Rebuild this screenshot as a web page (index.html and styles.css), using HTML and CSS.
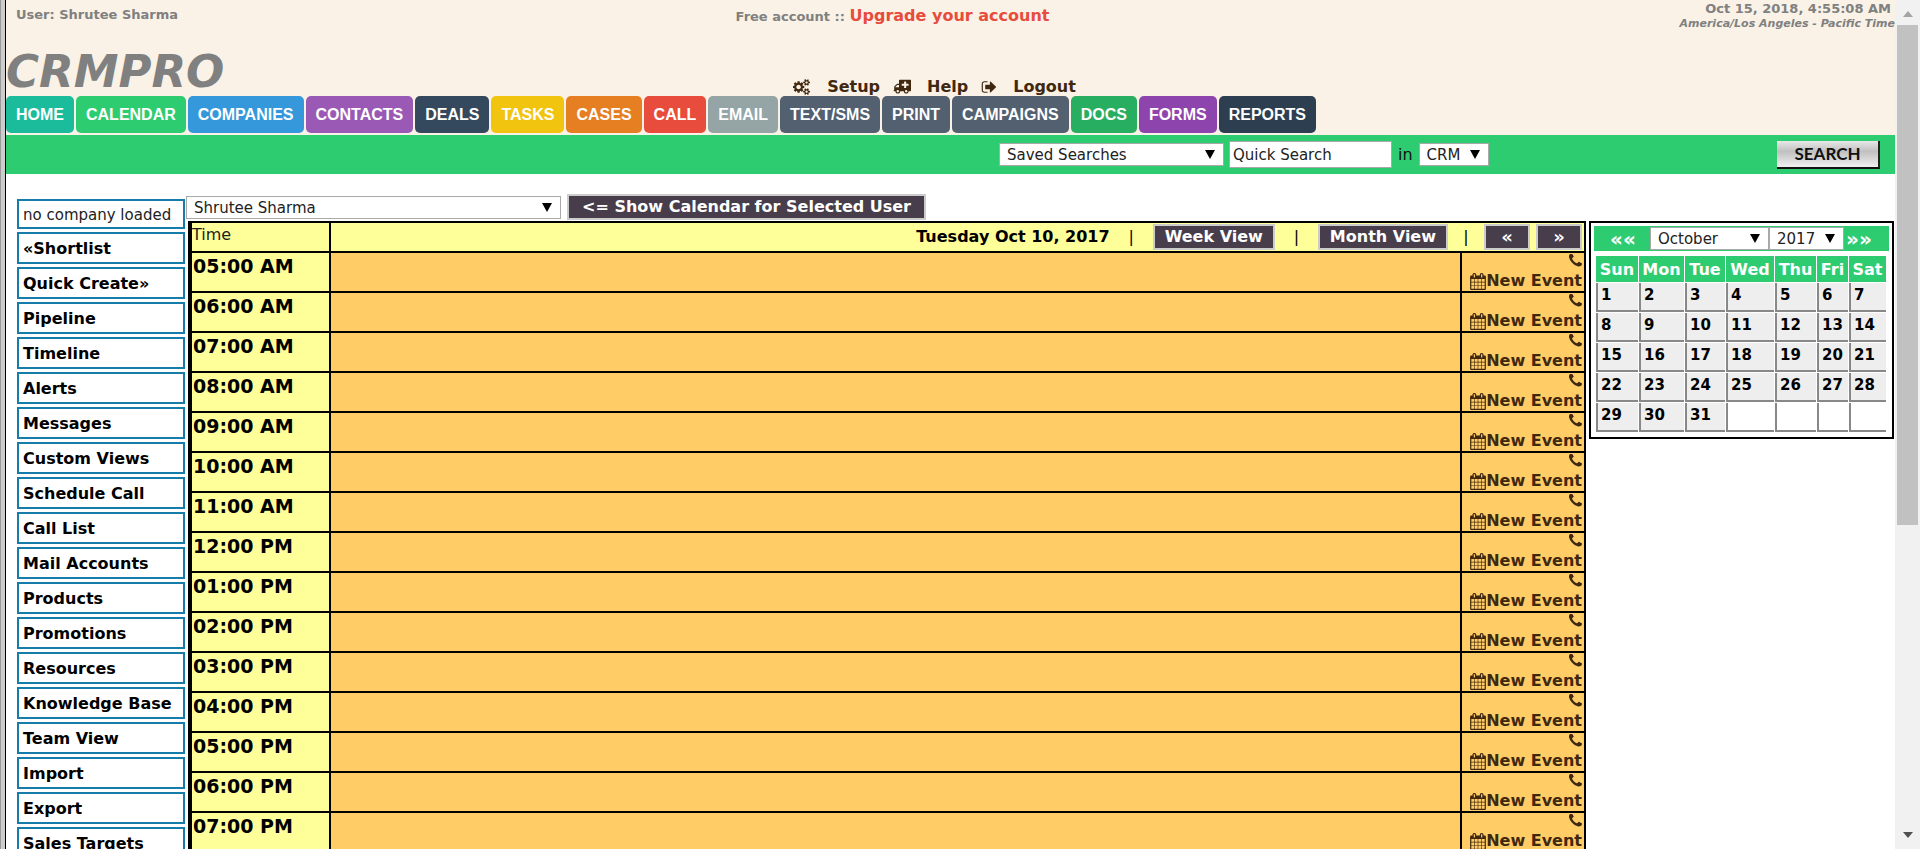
FILE: index.html
```html
<!DOCTYPE html>
<html lang="en">
<head>
<meta charset="utf-8">
<title>CRMPRO</title>
<link rel="stylesheet" href="styles.css">
</head>
<body>
<svg class="sprite" aria-hidden="true">
  <symbol id="i-phone" viewBox="192 192 1408 1408"><path d="M1600 1240q0 27-10 70.500t-21 68.500q-21 50-122 106-94 51-186 51-27 0-53-3.500t-57.500-12.500-47-14.500-55.500-20.500-49-18q-98-35-175-83-127-79-264-216t-216-264q-48-77-83-175-3-9-18-49t-20.500-55.500-14.500-47-12.500-57.500-3.500-53q0-92 51-186 56-101 106-122 25-11 68.500-21t70.500-10q14 0 21 3 18 6 53 76 11 19 30 54t35 63.500 31 53.500q3 4 17.500 25t21.500 35.500 7 28.500q0 20-28.500 50t-62 55-62 53-28.500 46q0 9 5 22.500t8.500 20.500 14 24 11.500 19q76 137 174 235t235 174q2 1 19 11.500t24 14 20.500 8.500 22.500 5q18 0 46-28.500t53-62 55-62 50-28.500q14 0 28.500 7t35.500 21.500 25 17.500q25 15 53.500 31t63.500 35 54 30q70 35 76 53 3 7 3 21z"/></symbol>
  <symbol id="i-cal" viewBox="64 0 1664 1792"><path d="M192 1664h288v-288h-288v288zm352 0h320v-288h-320v288zm-352-352h288v-320h-288v320zm352 0h320v-320h-320v320zm-352-384h288v-288h-288v288zm736 736h320v-288h-320v288zm-384-736h320v-288h-320v288zm768 736h288v-288h-288v288zm-384-352h320v-320h-320v320zm-352-864v-288q0-13-9.500-22.500t-22.500-9.500h-64q-13 0-22.500 9.500t-9.500 22.500v288q0 13 9.500 22.500t22.500 9.500h64q13 0 22.500-9.500t9.500-22.500zm736 864h288v-320h-288v320zm-384-384h320v-288h-320v288zm384 0h288v-288h-288v288zm32-480v-288q0-13-9.500-22.500t-22.500-9.500h-64q-13 0-22.500 9.500t-9.500 22.500v288q0 13 9.500 22.500t22.500 9.500h64q13 0 22.500-9.500t9.500-22.500zm384-64v1280q0 52-38 90t-90 38h-1408q-52 0-90-38t-38-90v-1280q0-52 38-90t90-38h128v-96q0-66 47-113t113-47h64q66 0 113 47t47 113v96h384v-96q0-66 47-113t113-47h64q66 0 113 47t47 113v96h128q52 0 90 38t38 90z"/></symbol>
  <symbol id="i-cogs" viewBox="0 0 1920 1792"><path d="M832 896q0-106-75-181t-181-75-181 75-75 181 75 181 181 75 181-75 75-181zm768 512q0-52-38-90t-90-38-90 38-38 90q0 53 37.500 90.500t90.500 37.500 90.500-37.500 37.500-90.500zm0-1024q0-52-38-90t-90-38-90 38-38 90q0 53 37.500 90.500t90.500 37.500 90.500-37.500 37.500-90.500zm-384 421v185q0 10-7 19.500t-16 10.500l-155 24q-11 35-32 76 34 48 90 115 7 11 7 20 0 12-7 19-23 30-82.500 89.500t-78.500 59.500q-11 0-21-7l-115-90q-37 19-77 31-11 108-23 155-7 24-30 24h-186q-11 0-20-7.500t-10-17.500l-23-153q-34-10-75-31l-118 89q-7 7-20 7-11 0-21-8-144-133-144-160 0-9 7-19 10-14 41-53t47-61q-23-44-35-82l-152-24q-10-1-17-9.500t-7-19.500v-185q0-10 7-19.500t16-10.500l155-24q11-35 32-76-34-48-90-115-7-11-7-20 0-12 7-20 22-30 82-89t79-59q11 0 21 7l115 90q34-18 77-32 11-108 23-154 7-24 30-24h186q11 0 20 7.500t10 17.500l23 153q34 10 75 31l118-89q8-7 20-7 11 0 21 8 144 133 144 160 0 8-7 19-12 16-42 54t-45 60q23 48 34 82l152 23q10 2 17 10.500t7 19.500zm640 533v140q0 16-149 31-12 27-30 52 51 113 51 138 0 4-4 7-122 71-124 71-8 0-46-47t-52-68q-20 2-30 2t-30-2q-14 21-52 68t-46 47q-2 0-124-71-4-3-4-7 0-25 51-138-18-25-30-52-149-15-149-31v-140q0-16 149-31 13-29 30-52-51-113-51-138 0-4 4-7 4-2 35-20t59-34 30-16q8 0 46 46.500t52 67.500q20-2 30-2t30 2q51-71 92-112l6-2q4 0 124 70 4 3 4 7 0 25-51 138 17 23 30 52 149 15 149 31zm0-1024v140q0 16-149 31-12 27-30 52 51 113 51 138 0 4-4 7-122 71-124 71-8 0-46-47t-52-68q-20 2-30 2t-30-2q-14 21-52 68t-46 47q-2 0-124-71-4-3-4-7 0-25 51-138-18-25-30-52-149-15-149-31v-140q0-16 149-31 13-29 30-52-51-113-51-138 0-4 4-7 4-2 35-20t59-34 30-16q8 0 46 46.500t52 67.500q20-2 30-2t30 2q51-71 92-112l6-2q4 0 124 70 4 3 4 7 0 25-51 138 17 23 30 52 149 15 149 31z"/></symbol>
  <symbol id="i-amb" viewBox="0 0 1920 1536"><path fill-rule="evenodd" d="M256 800h384V544H482q-13 0-22 9L265 748q-9 9-9 22zM1664 610V450q0-32-32-32h-224V224q0-32-32-32h-160q-32 0-32 32v194H960q-32 0-32 32v160q0 32 32 32h224v194q0 32 32 32h160q32 0 32-32V642h224q32 0 32-32zM1920 64v1088q0 64-64 64h-192q0 106-75 181t-181 75-181-75-75-181H768q0 106-75 181t-181 75-181-75-75-181H128q-64 0-64-64t64-64V770q0-64 45-109l198-198q45-45 109-45h160V64q0-64 64-64h1152q64 0 64 64zM640 1216q0-53-37-90t-91-38-90 38-38 90 38 90 90 38 91-38 37-90zM1536 1216q0-53-37-90t-91-38-90 38-38 90 38 90 90 38 91-38 37-90z"/></symbol>
  <symbol id="i-out" viewBox="64 128 1600 1536"><path d="M704 1440q0 4 1 20t.5 26.500-3 23.500-10 19.500-20.500 6.500h-320q-119 0-203.500-84.500t-84.500-203.500v-704q0-119 84.500-203.500t203.500-84.500h320q13 0 22.500 9.500t9.500 22.500q0 4 1 20t.5 26.500-3 23.500-10 19.500-20.500 6.500h-320q-66 0-113 47t-47 113v704q0 66 47 113t113 47h312l11.500 1 11.500 3 8 5.500 7 9 2 13.500zm928-544q0 26-19 45l-544 544q-19 19-45 19t-45-19-19-45v-288h-448q-26 0-45-19t-19-45v-384q0-26 19-45t45-19h448v-288q0-26 19-45t45-19 45 19l544 544q19 19 19 45z"/></symbol>
</svg>
<div class="app">
  <div class="page">
    <header class="top">
      <div class="info">
        <span class="user">User: Shrutee Sharma</span>
        <span class="plan">Free account :: <a href="#">Upgrade your account</a></span>
        <span class="clock"><span class="now">Oct 15, 2018, 4:55:08 AM</span><em>America/Los Angeles - Pacific Time</em></span>
      </div>
      <div class="brand">
        <h1>CRMPRO</h1>
        <div class="tools">
          <a href="#"><svg class="ico"><use href="#i-cogs"/></svg>Setup</a>
          <a href="#"><svg class="ico"><use href="#i-amb"/></svg>Help</a>
          <a href="#"><svg class="ico out"><use href="#i-out"/></svg>Logout</a>
        </div>
      </div>
      <nav class="tabs">
        <a class="t-home" href="#">HOME</a><a class="t-calendar" href="#">CALENDAR</a><a class="t-companies" href="#">COMPANIES</a><a class="t-contacts" href="#">CONTACTS</a><a class="t-deals" href="#">DEALS</a><a class="t-tasks" href="#">TASKS</a><a class="t-cases" href="#">CASES</a><a class="t-call" href="#">CALL</a><a class="t-email" href="#">EMAIL</a><a class="t-slate" href="#">TEXT/SMS</a><a class="t-slate" href="#">PRINT</a><a class="t-slate" href="#">CAMPAIGNS</a><a class="t-docs" href="#">DOCS</a><a class="t-forms" href="#">FORMS</a><a class="t-reports" href="#">REPORTS</a>
      </nav>
    </header>
    <form class="searchbar">
      <span class="sel w-saved"><select aria-label="Saved searches"><option>Saved Searches</option></select></span>
      <input type="text" aria-label="Quick search" value="Quick Search">
      <label for="scope">in</label>
      <span class="sel w-scope"><select id="scope"><option>CRM</option></select></span>
      <button class="go" type="button">SEARCH</button>
    </form>
    <div class="body">
      <aside class="side" id="side">
        <span class="note">no company loaded</span>
      </aside>
      <main class="main">
        <div class="pick">
          <span class="sel w-user"><select aria-label="User"><option>Shrutee Sharma</option></select></span>
          <button class="btn wide" type="button">&lt;= Show Calendar for Selected User</button>
        </div>
        <div class="cols">
          <table class="day">
            <colgroup><col class="c-time"><col><col class="c-new"></colgroup>
            <thead>
              <tr><th class="time">Time</th><th colspan="2"><div class="bar"><b>Tuesday Oct 10, 2017</b><i>|</i><button class="btn view" type="button">Week View</button><i>|</i><button class="btn view" type="button">Month View</button><i class="near">|</i><span class="pair"><button class="btn arrow" type="button">«</button><button class="btn arrow" type="button">»</button></span></div></th></tr>
            </thead>
            <tbody id="hours"></tbody>
          </table>
          <section class="month">
            <div class="mhead">
              <a href="#">««</a><span class="sel w-month"><select aria-label="Month"><option>October</option></select></span><span class="sel w-year"><select aria-label="Year"><option>2017</option></select></span><a href="#">»»</a>
            </div>
            <table class="grid">
              <colgroup><col class="d0"><col class="d1"><col class="d2"><col class="d3"><col class="d4"><col class="d5"><col class="d6"></colgroup>
              <thead><tr><th>Sun</th><th>Mon</th><th>Tue</th><th>Wed</th><th>Thu</th><th>Fri</th><th>Sat</th></tr></thead>
              <tbody id="days"></tbody>
            </table>
          </section>
        </div>
      </main>
    </div>
  </div>
  <div class="scroll"><span class="up"></span><span class="thumb"></span><span class="down"></span></div>
</div>
<script src="app.js"></script>
</body>
</html>
```
FILE: styles.css
```css
* { box-sizing: border-box; }
body {
  margin: 0;
  background: #fff;
  color: #000;
  font: 16px/20px Verdana, "DejaVu Sans", sans-serif;
}
a { color: inherit; text-decoration: none; }
.sprite { display: none; }

.app {
  display: flex;
  height: 100vh;
  overflow: hidden;
  border-left: 1px solid #999;
}
.page {
  flex: 1;
  min-width: 0;
  overflow: hidden;
  margin-left: 4px;
  border-left: 1px solid #000;
  box-shadow: -4px 0 #ccc;
}

.top { background: #faf2e6; padding-bottom: 2px; }
.info {
  display: grid;
  grid-template-columns: 1fr auto 1fr;
  height: 44px;
  color: #808080;
  font-size: 13px;
  font-weight: bold;
}
.user { padding: 5px 0 0 10px; }
.plan { padding: 6px 116px 0 0; }
.plan a { color: #e74c3c; font-size: 16px; }
.clock { display: flex; flex-direction: column; align-items: flex-end; }
.now { padding-right: 4px; line-height: 18px; }
.clock em { font-size: 11px; line-height: 12px; }

.brand {
  display: grid;
  grid-template-columns: 1fr auto 1fr;
  align-items: end;
  height: 52px;
}
.brand h1 {
  margin: 0;
  color: #808080;
  font: italic bold 45px/48px Verdana, "DejaVu Sans", sans-serif;
}
.tools {
  display: flex;
  gap: 13px;
  padding: 0 32px 1px 0;
  color: #402810;
  font-weight: bold;
  line-height: 16px;
}
.tools a { display: flex; align-items: center; gap: 16px; }
.ico { width: 18px; height: 16px; fill: currentColor; }
.ico.out { width: 16px; height: 14px; }

.tabs { display: flex; gap: 2px; }
.tabs a {
  padding: 0 10px;
  border-radius: 5px;
  color: #fff;
  font: bold 16px/37px Arial, "Liberation Sans", sans-serif;
}
.t-home { background: #1abc9c; }
.t-calendar { background: #2ecc71; }
.t-companies { background: #3498db; }
.t-contacts { background: #9b59b6; }
.t-deals { background: #34495e; }
.t-tasks { background: #f1c40f; }
.t-cases { background: #e67e22; }
.t-call { background: #e74c3c; }
.t-email { background: #95a5a6; }
.t-slate { background: #526070; }
.t-docs { background: #27ae60; }
.t-forms { background: #8e44ad; }
.t-reports { background: #2c3e50; }

.sel { position: relative; display: inline-flex; }
.sel::after {
  content: "";
  position: absolute;
  right: 9px;
  top: 7px;
  border: 5px solid transparent;
  border-top: 9px solid #000;
  border-bottom: 0;
  pointer-events: none;
}
select, input {
  width: 100%;
  height: 23px;
  padding: 1px 7px 0;
  border: 1px solid #a9a9a9;
  border-radius: 0;
  background: #fff;
  color: #222;
  font: 15px Verdana, "DejaVu Sans", sans-serif;
  appearance: none;
}

.searchbar {
  display: flex;
  align-items: center;
  gap: 5px;
  height: 39px;
  padding: 0 15px 0 993px;
  background: #2ecc71;
}
.searchbar input { width: 163px; height: 27px; padding: 1px 3px 0; }
.searchbar label { padding: 0 1px; color: #111; }
.w-saved { width: 225px; }
.w-scope { width: 70px; }
.w-user { width: 375px; }
.w-month { width: 119px; }
.w-year { width: 75px; }
.go {
  width: 103px;
  height: 28px;
  margin-left: auto;
  padding: 0;
  border: 0;
  border-right: 2px solid #222;
  border-bottom: 2px solid #111;
  background: linear-gradient(#e8e8e8, #c0c0c0 40%, #f0f0f0);
  color: #111;
  font: bold 17px/24px Lato, sans-serif;
}

.body { display: flex; padding-top: 20px; }
.side {
  display: flex;
  flex-direction: column;
  gap: 3px;
  width: 168px;
  margin: 5px 1px 0 11px;
  flex: none;
}
.side a, .note {
  border: 2px solid #167dab;
  padding: 5px 4px 3px;
  white-space: nowrap;
}
.side a { font-weight: bold; }
.note { padding: 4px 4px 2px; color: #222; font-size: 15px; }

.main { flex: 1; min-width: 0; }
.pick { display: flex; align-items: center; gap: 6px; height: 26px; }
.btn {
  height: 26px;
  padding: 0 8px;
  border: 2px solid #ccc;
  background: #483d4b;
  color: #fff;
  font: bold 16px/20px Verdana, "DejaVu Sans", sans-serif;
}
.wide { padding: 0 13px; }
.view { padding: 0 10px; }
.arrow { width: 46px; font-size: 18px; }

.cols {
  display: flex;
  align-items: flex-start;
  gap: 3px;
  padding: 1px 1px 0 2px;
}
.day {
  flex: 1;
  border-collapse: separate;
  border-spacing: 0;
  table-layout: fixed;
  border: 2px solid #000;
  border-left-width: 4px;
}
.c-time { width: 139px; }
.c-new { width: 122px; }
.day th, .day td { padding: 0; border-bottom: 2px solid #000; vertical-align: top; }
.day thead th { height: 30px; background: #ff9; }
.day th.time {
  border-right: 2px solid #000;
  background: #ff9;
  text-align: left;
  line-height: 24px;
}
.day thead .time { font-weight: normal; color: #222; }
.day tbody .time { font-size: 19px; line-height: 26px; padding-left: 1px; }
.day td { height: 40px; background: #fc6; }
.day td.slot { border-right: 2px solid #000; }
.day td.new { color: #402810; font-weight: bold; }
.acts { display: flex; flex-direction: column; align-items: flex-end; padding: 1px 2px 0 0; }
.acts a { display: flex; align-items: flex-end; height: 18px; line-height: 18px; }
.acts svg { fill: currentColor; }
.acts .ph { width: 13px; height: 13px; margin-bottom: auto; }
.acts .ca { width: 16px; height: 17px; }
.bar {
  display: flex;
  align-items: center;
  justify-content: flex-end;
  height: 28px;
  padding-right: 2px;
}
.bar i { width: 43px; font-style: normal; font-weight: normal; text-align: center; }
.bar .near { width: 36px; }
.pair { display: flex; gap: 6px; }

.month { width: 305px; border: 2px solid #000; padding: 3px; }
.mhead {
  display: flex;
  align-items: center;
  height: 25px;
  padding-left: 16px;
  background: #2ecc71;
  color: #fff;
  font-size: 20px;
  font-weight: bold;
}
.mhead a { padding: 0 2px; }
.mhead a:first-child { width: 40px; padding: 0; }
.grid { width: 292px; margin: 4px 1px 1px; border-spacing: 1px; table-layout: fixed; }
.grid th { height: 26px; padding: 2px 0 0; background: #2ecc71; color: #fff; }
.grid td {
  height: 29px;
  padding: 0 0 3px 3px;
  border-left: 2px solid #888;
  border-bottom: 2px solid #888;
  background: #eee;
  font-size: 15px;
  font-weight: bold;
}
.grid td.off { background: #fff; }
.d0 { width: 42px; } .d1 { width: 45px; } .d2 { width: 40px; } .d3 { width: 48px; }
.d4 { width: 41px; } .d5 { width: 31px; } .d6 { width: 37px; }

.scroll {
  display: flex;
  flex-direction: column;
  align-items: center;
  width: 25px;
  padding: 11px 0;
  background: #f1f1f1;
}
.up, .down { border: 5px solid transparent; }
.up { border-top: 0; border-bottom: 6px solid #a3a3a3; }
.down { border-bottom: 0; border-top: 6px solid #505050; margin-top: auto; }
.thumb { width: 21px; height: 500px; margin-top: 8px; background: #c1c1c1; }
```
FILE: app.js
```js
const links = ['«Shortlist', 'Quick Create»', 'Pipeline', 'Timeline', 'Alerts', 'Messages',
  'Custom Views', 'Schedule Call', 'Call List', 'Mail Accounts', 'Products', 'Promotions',
  'Resources', 'Knowledge Base', 'Team View', 'Import', 'Export', 'Sales Targets'];
document.getElementById('side').insertAdjacentHTML('beforeend',
  links.map(t => `<a href="#">${t}</a>`).join(''));

let hours = '';
for (let h = 5; h <= 19; h++) {
  const label = String(h > 12 ? h - 12 : h).padStart(2, '0') + ':00 ' + (h < 12 ? 'AM' : 'PM');
  hours += `<tr><th class="time">${label}</th><td class="slot"></td><td class="new"><div class="acts">
    <a href="#" aria-label="Call"><svg class="ph"><use href="#i-phone"/></svg></a>
    <a href="#"><svg class="ca"><use href="#i-cal"/></svg>New Event</a></div></td></tr>`;
}
document.getElementById('hours').innerHTML = hours;

let days = '';
for (let w = 0; w < 5; w++) {
  days += '<tr>';
  for (let d = 1; d <= 7; d++) {
    const n = w * 7 + d;
    days += n <= 31 ? `<td>${n}</td>` : '<td class="off"></td>';
  }
  days += '</tr>';
}
document.getElementById('days').innerHTML = days;
```
